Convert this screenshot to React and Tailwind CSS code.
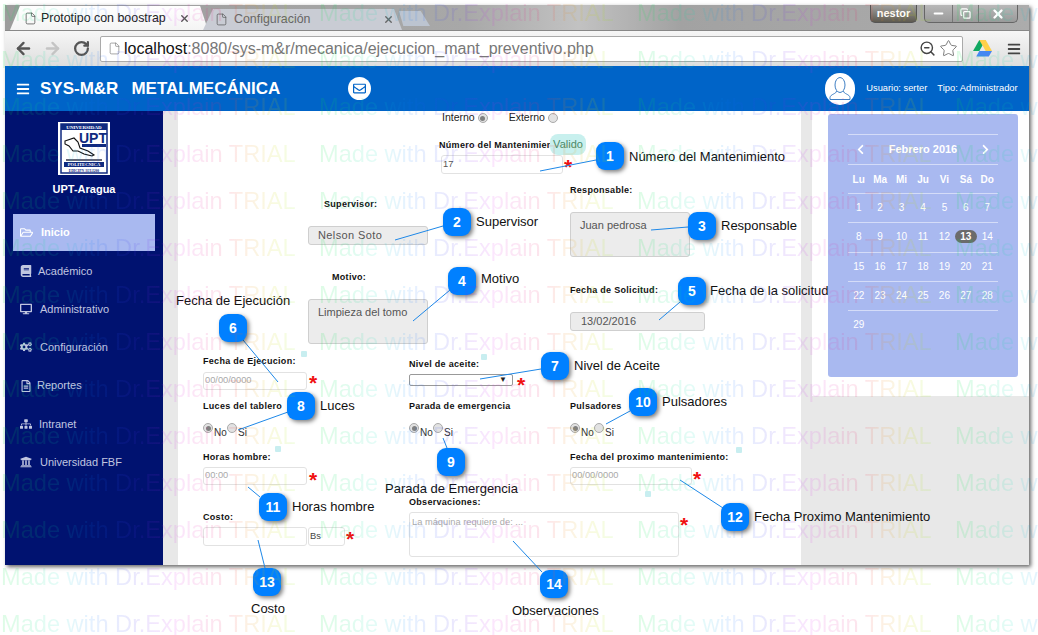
import React from "react";
import { ArrowLeft, ArrowRight, RotateCw, ZoomOut, Star, File, X, Minus, Copy } from "lucide-react";
import { FaBars, FaRegEnvelope, FaRegFolderOpen, FaBook, FaDesktop, FaCogs, FaRegFileAlt, FaSitemap, FaUniversity, FaChevronLeft, FaChevronRight } from "react-icons/fa";

const navItems = [
  { label: "Académico", icon: FaBook, gap: "gap-[6px]" },
  { label: "Administrativo", icon: FaDesktop, gap: "gap-[8px]" },
  { label: "Configuración", icon: FaCogs, gap: "gap-[8px]" },
  { label: "Reportes", icon: FaRegFileAlt, gap: "gap-[5px]" },
  { label: "Intranet", icon: FaSitemap, gap: "gap-[7px]" },
  { label: "Universidad FBF", icon: FaUniversity, gap: "gap-[8px]" },
];

const weekDays = ["Lu", "Ma", "Mi", "Ju", "Vi", "Sá", "Do"];
const weeks = [
  [1, 2, 3, 4, 5, 6, 7],
  [8, 9, 10, 11, 12, 13, 14],
  [15, 16, 17, 18, 19, 20, 21],
  [22, 23, 24, 25, 26, 27, 28],
  [29],
];

// callouts of the help page: number, centre, text and where the pointer line ends
const callouts = [
  { n: 1, x: 610, y: 156, text: "Número del Mantenimiento", tx: 629, ty: 157, line: [596, 160, 540, 171] },
  { n: 2, x: 457, y: 222, text: "Supervisor", tx: 476, ty: 222, line: [443, 226, 395, 240] },
  { n: 3, x: 702, y: 226, text: "Responsable", tx: 721, ty: 226, line: [688, 227, 651, 230] },
  { n: 4, x: 462, y: 281, text: "Motivo", tx: 481, ty: 279, line: [450, 290, 413, 321] },
  { n: 5, x: 692, y: 291, text: "Fecha de la solicitud", tx: 710, ty: 291, line: [680, 302, 659, 320] },
  { n: 6, x: 233, y: 328, text: "Fecha de Ejecución", tx: 176, ty: 301, line: [243, 340, 278, 382] },
  { n: 7, x: 555, y: 366, text: "Nivel de Aceite", tx: 574, ty: 366, line: [541, 369, 480, 379] },
  { n: 8, x: 301, y: 406, text: "Luces", tx: 320, ty: 406, line: [288, 412, 238, 430] },
  { n: 9, x: 451, y: 462, text: "Parada de Emergencia", tx: 385, ty: 489, line: [447, 448, 443, 438] },
  { n: 10, x: 643, y: 402, text: "Pulsadores", tx: 662, ty: 402, line: [630, 411, 606, 424] },
  { n: 11, x: 273, y: 507, text: "Horas hombre", tx: 292, ty: 507, line: [260, 497, 248, 487] },
  { n: 12, x: 735, y: 517, text: "Fecha Proximo Mantenimiento", tx: 754, ty: 517, line: [723, 508, 680, 480] },
  { n: 13, x: 267, y: 582, text: "Costo", tx: 251, ty: 609, line: [265, 568, 258, 540] },
  { n: 14, x: 554, y: 584, text: "Observaciones", tx: 512, ty: 611, line: [542, 572, 513, 541] },
];

const tips = [
  [304, 354],
  [484, 357],
  [278, 449],
  [739, 450],
  [648, 494],
];

const Label = ({ className = "", children }) => (
  <div className={`h-[12px] text-[9px] font-bold leading-[12px] tracking-[0.3px] text-[#111] whitespace-nowrap ${className}`}>{children}</div>
);

// the asterisk sits in a 12px tall box so that it never pushes the row below
const Req = ({ className = "" }) => (
  <span className={`h-[12px] text-[21px] font-bold leading-[16px] text-[#f01010] ${className}`}>*</span>
);

const Radio = ({ checked }) => (
  <span className="flex h-[10px] w-[10px] shrink-0 items-center justify-center rounded-full border border-[#aaa] bg-[#e2e2e2]">
    {checked && <span className="h-[5px] w-[5px] rounded-full bg-[#808080]"></span>}
  </span>
);

const NoSi = () => (
  <div className="mt-[11px] flex h-[15px] text-[10px] leading-[10px] text-[#333]">
    <Radio checked />
    <span className="mt-[5px] w-[14px] pl-[1px]">No</span>
    <Radio />
    <span className="mt-[5px] pl-[1px]">Si</span>
  </div>
);

const Logo = () => (
  <svg width="52" height="53" viewBox="0 0 52 53" className="bg-white">
    <rect x="3" y="2" width="46" height="49" fill="#fff" stroke="#102a80" strokeWidth="1.5" />
    <rect x="3" y="2" width="46" height="6" fill="#102a80" />
    <text x="26" y="7.2" textAnchor="middle" fontSize="5" fontWeight="700" fill="#fff" fontFamily="Liberation Serif, serif">UNIVERSIDAD</text>
    <text x="35" y="21" textAnchor="middle" fontSize="14" fontWeight="700" fill="#102a80" fontFamily="Liberation Sans, sans-serif">UPT</text>
    <rect x="24" y="22" width="24" height="3" fill="#102a80" />
    <path d="M7 19l9-3 4 4 2 6 8 3 6 4-2 1-8-2-6-3-5 0-4-5-4-2z" fill="#fff" stroke="#111" strokeWidth="1.1" />
    <rect x="8" y="37" width="36" height="2" fill="#667" />
    <rect x="6" y="40" width="40" height="5" fill="#102a80" />
    <text x="26" y="44.4" textAnchor="middle" fontSize="4.6" fontWeight="700" fill="#fff" fontFamily="Liberation Serif, serif">POLITECNICA</text>
    <text x="26" y="49.8" textAnchor="middle" fontSize="3.6" fontWeight="700" fill="#102a80" fontFamily="Liberation Serif, serif">EDICIPN  AULI200</text>
  </svg>
);

const DriveIcon = () => (
  <svg width="19" height="17" viewBox="0 0 19 17">
    <polygon points="6.3,0 12.7,0 6.3,11 0,11" fill="#11a861" />
    <polygon points="6.3,0 12.7,0 19,11 12.7,11" fill="#ffd04b" />
    <polygon points="3.2,16.5 6.3,11 19,11 15.8,16.5" fill="#4688f1" />
  </svg>
);

const Tabs = () => (
  <div className="flex h-[25px] items-end bg-[linear-gradient(90deg,#9c9c9c_0%,#a8a8a8_45%,#c2c2c2_56%,#a2a2a2_66%,#acacac_100%)]">
    <div className="ml-[5px] flex h-[24px] w-[198px] items-center bg-[linear-gradient(#ffffff,#f4f4f4)] pl-[14px] [clip-path:polygon(0_100%,5%_0,96%_0,100%_100%)]">
      <File size={13} strokeWidth={1.3} className="text-[#444]" />
      <span className="ml-[4px] w-[138px] text-[12.4px] text-[#222] whitespace-nowrap">Prototipo con boostrap</span>
      <X size={11} strokeWidth={3} className="text-[#555]" />
    </div>
    <div className="-ml-[5px] flex h-[21px] w-[199px] items-center bg-[#c9ccd4] pl-[12px] [clip-path:polygon(0_100%,5%_0,96%_0,100%_100%)]">
      <File size={13} strokeWidth={1.3} className="text-[#555]" />
      <span className="ml-[6px] w-[149px] text-[12.4px] text-[#666] whitespace-nowrap">Configuración</span>
      <X size={11} strokeWidth={3} className="text-[#666]" />
    </div>
    <div className="mb-[4px] -ml-[3px] h-[15px] w-[31px] bg-[#bcc4d0] [clip-path:polygon(0_0,70%_0,100%_100%,14%_100%)]"></div>
    <div className="mb-[7px] ml-auto flex h-[18px] items-stretch self-start">
      <div className="flex w-[47px] items-center justify-center rounded-b-[5px] border border-t-0 border-[#555] bg-[linear-gradient(#a0a0a0,#5e5a50)] text-[11px] font-bold text-white">nestor</div>
      <div className="ml-[7px] flex w-[94px] rounded-b-[5px] border border-t-0 border-[#666] bg-[linear-gradient(#b8b8b8,#9a9a9a)] text-white">
        <div className="flex w-[28px] items-center justify-center border-r border-[#777]">
          <Minus size={13} strokeWidth={4} className="text-white" />
        </div>
        <div className="flex w-[26px] items-center justify-center border-r border-[#777]">
          <Copy size={11} strokeWidth={2.6} className="text-white" />
        </div>
        <div className="flex flex-1 items-center justify-center">
          <X size={14} strokeWidth={4} className="text-white" />
        </div>
      </div>
      <div className="w-[11px]"></div>
    </div>
  </div>
);

const Toolbar = () => (
  <div className="flex h-[36px] items-center border-t border-[#888] bg-[linear-gradient(#f6f6f6,#dedede)] pl-[9px]">
    <ArrowLeft size={19} strokeWidth={3} className="text-[#555]" />
    <ArrowRight size={19} strokeWidth={3} className="ml-[10px] text-[#c4c4c4]" />
    <RotateCw size={17} strokeWidth={3.2} className="ml-[11px] text-[#555]" />
    <div className="ml-[10px] flex h-[26px] w-[863px] items-center rounded-[2px] border border-[#aaa] bg-white pl-[7px]">
      <File size={13} strokeWidth={1.2} className="text-[#777]" />
      <span className="ml-[3px] text-[16px] leading-none text-[#111]">localhost</span>
      <span className="text-[16px] leading-none text-[#777]">:8080/sys-m&amp;r/mecanica/ejecucion_mant_preventivo.php</span>
      <ZoomOut size={17} strokeWidth={2} className="ml-auto text-[#444]" />
      <Star size={19} strokeWidth={1.2} className="ml-[3px] mr-[4px] text-[#777]" />
    </div>
    <div className="ml-[10px]">
      <DriveIcon />
    </div>
    <FaBars size={14} className="ml-[15px] text-[#444]" />
  </div>
);

const Header = () => (
  <div className="flex h-[45px] items-center bg-[#0064c8] pl-[11px] text-white">
    <FaBars size={14} />
    <span className="ml-[10px] text-[17px] font-bold">SYS-M&amp;R</span>
    <span className="ml-[13px] text-[17px] font-bold">METALMECÁNICA</span>
    <span className="ml-[68px] flex h-[23px] w-[23px] items-center justify-center rounded-full bg-white text-[#0064c8]">
      <FaRegEnvelope size={13} />
    </span>
    <span className="ml-[454px] flex h-[32px] w-[30px] items-center justify-center rounded-full bg-white">
      <svg width="24" height="26" viewBox="0 0 24 26" fill="none" stroke="#3f7fc4" strokeWidth="1">
        <ellipse cx="12" cy="9" rx="5" ry="7.5" />
        <path d="M8.5 15c0 3-6 3-6.5 6.5v2h20v-2c-.5-3.5-6.5-3.5-6.5-6.5" />
      </svg>
    </span>
    <span className="ml-[11px] text-[9.3px] font-medium whitespace-nowrap">Usuario: serter</span>
    <span className="ml-[10px] text-[9.4px] font-medium whitespace-nowrap">Tipo: Administrador</span>
  </div>
);

const Sidebar = () => (
  <aside className="flex w-[158px] shrink-0 flex-col bg-[#001270]">
    <div className="mt-[11px] ml-[53px]">
      <Logo />
    </div>
    <div className="mt-[7px] h-[14px] text-center text-[11px] leading-[14px] font-bold text-white">UPT-Aragua</div>
    <div className="mt-[18px] mb-[1px] ml-[8px] flex h-[37px] w-[142px] items-center gap-[8px] bg-[#a9b9f0] pl-[7px] text-[11px] font-bold text-white">
      <FaRegFolderOpen size={13} />
      Inicio
    </div>
    {navItems.map((item) => {
      const Icon = item.icon;
      return (
        <div key={item.label} className={`flex h-[38.2px] items-center pl-[15px] text-[11px] text-[#c0c6e0] ${item.gap}`}>
          <Icon size={12} />
          {item.label}
        </div>
      );
    })}
  </aside>
);

const boxCls = "rounded-[3px] border border-[#cfcfcf] bg-[#ececec] text-[11px] text-[#555]";
const inputCls = "flex items-center rounded-[3px] border border-[#e2e2e2] bg-white pl-[1px] text-[9.3px]";

const Form = () => (
  <main className="w-[623px] shrink-0 bg-white">
    <div className="ml-[264px] flex h-[14px] items-center text-[10.5px] text-[#222]">
      <span>Interno</span>
      <span className="ml-[3px]"><Radio checked /></span>
      <span className="ml-[21px]">Externo</span>
      <span className="ml-[3px]"><Radio /></span>
    </div>

    <div className="mt-[9px] ml-[261px] flex h-[21px] items-center">
      <Label className="w-[111px] overflow-hidden">Número del Mantenimiento</Label>
      <span className="flex h-[21px] w-[36px] items-center justify-center rounded-[8px] bg-[#c8f0ee] text-[11px] text-[#4a8a6a]">Valido</span>
    </div>
    <div className="ml-[263px] flex h-[19px] items-start">
      <div className={`h-[19px] w-[122px] text-[#555] ${inputCls}`}>17</div>
      <Req className="mt-[4px] ml-[1px]" />
    </div>

    <div className="flex">
      <div className="ml-[130px] w-[262px]">
        <Label className="mt-[24px] ml-[16px]">Supervisor:</Label>
        <div className={`mt-[16px] flex h-[19px] w-[120px] items-center pl-[9px] tracking-[0.4px] ${boxCls}`}>Nelson Soto</div>
        <Label className="mt-[26px] ml-[24px]">Motivo:</Label>
        <div className={`mt-[16px] h-[45px] w-[120px] pt-[4px] pl-[9px] ${boxCls}`}>Limpieza del tomo</div>
      </div>
      <div>
        <Label className="mt-[10px]">Responsable:</Label>
        <div className={`mt-[16px] h-[45px] w-[120px] pt-[4px] pl-[9px] ${boxCls}`}>Juan pedrosa</div>
        <Label className="mt-[27px]">Fecha de Solicitud:</Label>
        <div className={`mt-[16px] flex h-[19px] w-[135px] items-center pl-[10px] ${boxCls}`}>13/02/2016</div>
      </div>
    </div>

    <div className="mt-[11px] flex">
      <div className="ml-[25px] w-[206px]">
        <Label>Fecha de Ejecucion:</Label>
        <div className="mt-[5px] flex h-[18px] items-start">
          <div className={`h-[18px] w-[104px] text-[#aaa] ${inputCls}`}>00/00/0000</div>
          <Req className="mt-[3px] ml-[2px]" />
        </div>
        <Label className="mt-[10px]">Luces del tablero</Label>
        <NoSi />
        <Label className="mt-[13px]">Horas hombre:</Label>
        <div className="mt-[4px] flex h-[18px] items-start">
          <div className={`h-[18px] w-[104px] text-[#aaa] ${inputCls}`}>00:00</div>
          <Req className="mt-[5px] ml-[2px]" />
        </div>
        <Label className="mt-[26px]">Costo:</Label>
        <div className="mt-[4px] flex h-[19px] items-start">
          <div className={`h-[19px] w-[104px] ${inputCls}`}></div>
          <div className={`ml-[1px] h-[19px] w-[37px] text-[#444] ${inputCls}`}>Bs</div>
          <Req className="mt-[4px] ml-[1px]" />
        </div>
      </div>

      <div className="w-[161px]">
        <Label className="mt-[3px]">Nivel de aceite:</Label>
        <div className="mt-[4px] flex h-[12px] items-start">
          <div className="flex h-[12px] w-[104px] items-center justify-end rounded-[2px] border border-[#999] bg-white pr-[5px] text-[8px] leading-none text-[#222]">▼</div>
          <Req className="mt-[3px] ml-[4px]" />
        </div>
        <Label className="mt-[14px]">Parada de emergencia</Label>
        <NoSi />
        <Label className="mt-[58px]">Observaciones:</Label>
        <div className="mt-[4px] flex h-[45px] w-[290px] items-start">
          <div className="h-[45px] w-[270px] shrink-0 rounded-[3px] border border-[#e2e2e2] bg-white pt-[3px] pl-[2px] text-[9.3px] text-[#aaa]">La máquina requiere de: ...</div>
          <Req className="mt-[5px] ml-[1px]" />
        </div>
      </div>

      <div>
        <Label className="mt-[45px]">Pulsadores</Label>
        <NoSi />
        <Label className="mt-[13px]">Fecha del proximo mantenimiento:</Label>
        <div className="mt-[4px] flex h-[18px] items-start">
          <div className={`h-[18px] w-[122px] text-[#aaa] ${inputCls}`}>00/00/0000</div>
          <Req className="mt-[4px] ml-[1px]" />
        </div>
      </div>
    </div>
  </main>
);

const Calendar = () => (
  <div className="h-[263px] w-[190px] rounded-[3px] bg-[#a9b9f0] px-[20px] pt-[20px] text-white">
    <div className="flex h-[30px] items-center justify-between border-t border-[#d4dcf8] px-[7px] text-[11px] font-bold">
      <FaChevronLeft size={11} />
      <span>Febrero 2016</span>
      <FaChevronRight size={11} />
    </div>
    <div className="grid h-[29px] grid-cols-7 items-center border-t border-[#d4dcf8] text-center text-[10px] font-bold">
      {weekDays.map((d) => (
        <span key={d}>{d}</span>
      ))}
    </div>
    {weeks.map((week) => (
      <div key={week[0]} className="grid h-[29.3px] grid-cols-7 items-center border-t border-[#d4dcf8] pb-[1px] text-center text-[10px]">
        {week.map((d) =>
          d === 13 ? (
            <span key={d} className="h-[13px] rounded-full bg-[#6b6b6b] text-[10px] leading-[13px] font-bold">{d}</span>
          ) : (
            <span key={d}>{d}</span>
          )
        )}
      </div>
    ))}
  </div>
);

const Annotations = () => (
  <>
    <svg className="pointer-events-none absolute inset-0" width="1038" height="635">
      {callouts.map((c) => (
        <line key={c.n} x1={c.line[0]} y1={c.line[1]} x2={c.line[2]} y2={c.line[3]} stroke="#1e88e8" strokeWidth="1" />
      ))}
    </svg>
    {tips.map(([x, y]) => (
      <span key={x} className="absolute h-[6px] w-[6px] rounded-[1px] bg-[#c8eef0]" style={{ left: x - 3, top: y - 3 }}></span>
    ))}
    {callouts.map((c) => (
      <React.Fragment key={c.n}>
        <span
          className="absolute flex h-[28px] w-[28px] items-center justify-center rounded-[9px] bg-[#0080ff] text-[14px] font-bold text-white shadow-[2px_2px_4px_rgba(0,0,0,0.5)]"
          style={{ left: c.x - 14, top: c.y - 14 }}
        >
          {c.n}
        </span>
        <span className="absolute -translate-y-1/2 text-[13px] whitespace-nowrap text-[#111]" style={{ left: c.tx, top: c.ty }}>
          {c.text}
        </span>
      </React.Fragment>
    ))}
  </>
);

const Watermark = () => (
  <div className="pointer-events-none absolute inset-0 -mt-[11px] grid auto-rows-[47px] grid-cols-[repeat(4,318px)] overflow-hidden pl-[1px]">
    {Array.from({ length: 56 }).map((_, i) => (
      <span
        key={i}
        className="w-[298px] self-center bg-[linear-gradient(90deg,rgba(0,230,60,0.13)_0%,rgba(0,220,190,0.11)_20%,rgba(0,120,255,0.1)_30%,rgba(70,40,240,0.11)_46%,rgba(220,30,240,0.11)_58%,rgba(240,40,90,0.12)_76%,rgba(240,130,30,0.12)_82%,rgba(200,220,0,0.12)_92%,rgba(120,240,0,0.1)_100%)] bg-clip-text text-[23.6px] leading-[30px] whitespace-nowrap text-transparent"
      >
        Made with Dr.Explain TRIAL
      </span>
    ))}
  </div>
);

const App = () => (
  <div className="relative h-[635px] w-[1038px] overflow-hidden bg-white font-['Liberation_Sans',Arial,sans-serif]">
    <div className="ml-[5px] flex h-[565px] w-[1024px] flex-col pt-[5px]">
      <div className="flex h-[560px] flex-col overflow-hidden shadow-[2px_2px_4px_rgba(0,0,0,0.6)]">
        <Tabs />
        <Toolbar />
        <Header />
        <div className="flex min-h-0 flex-1">
          <Sidebar />
          <div className="w-[15px] shrink-0 bg-[#e8e8e8]"></div>
          <Form />
          <div className="flex flex-1 flex-col bg-[#e8e8e8]">
            <div className="flex h-[285px]">
              <div className="w-[11px] bg-[#e8e8e8]"></div>
              <div className="flex-1 bg-white pt-[3px] pl-[16px]">
                <Calendar />
              </div>
            </div>
          </div>
        </div>
      </div>
    </div>
    <Annotations />
    <Watermark />
  </div>
);

export default App;
